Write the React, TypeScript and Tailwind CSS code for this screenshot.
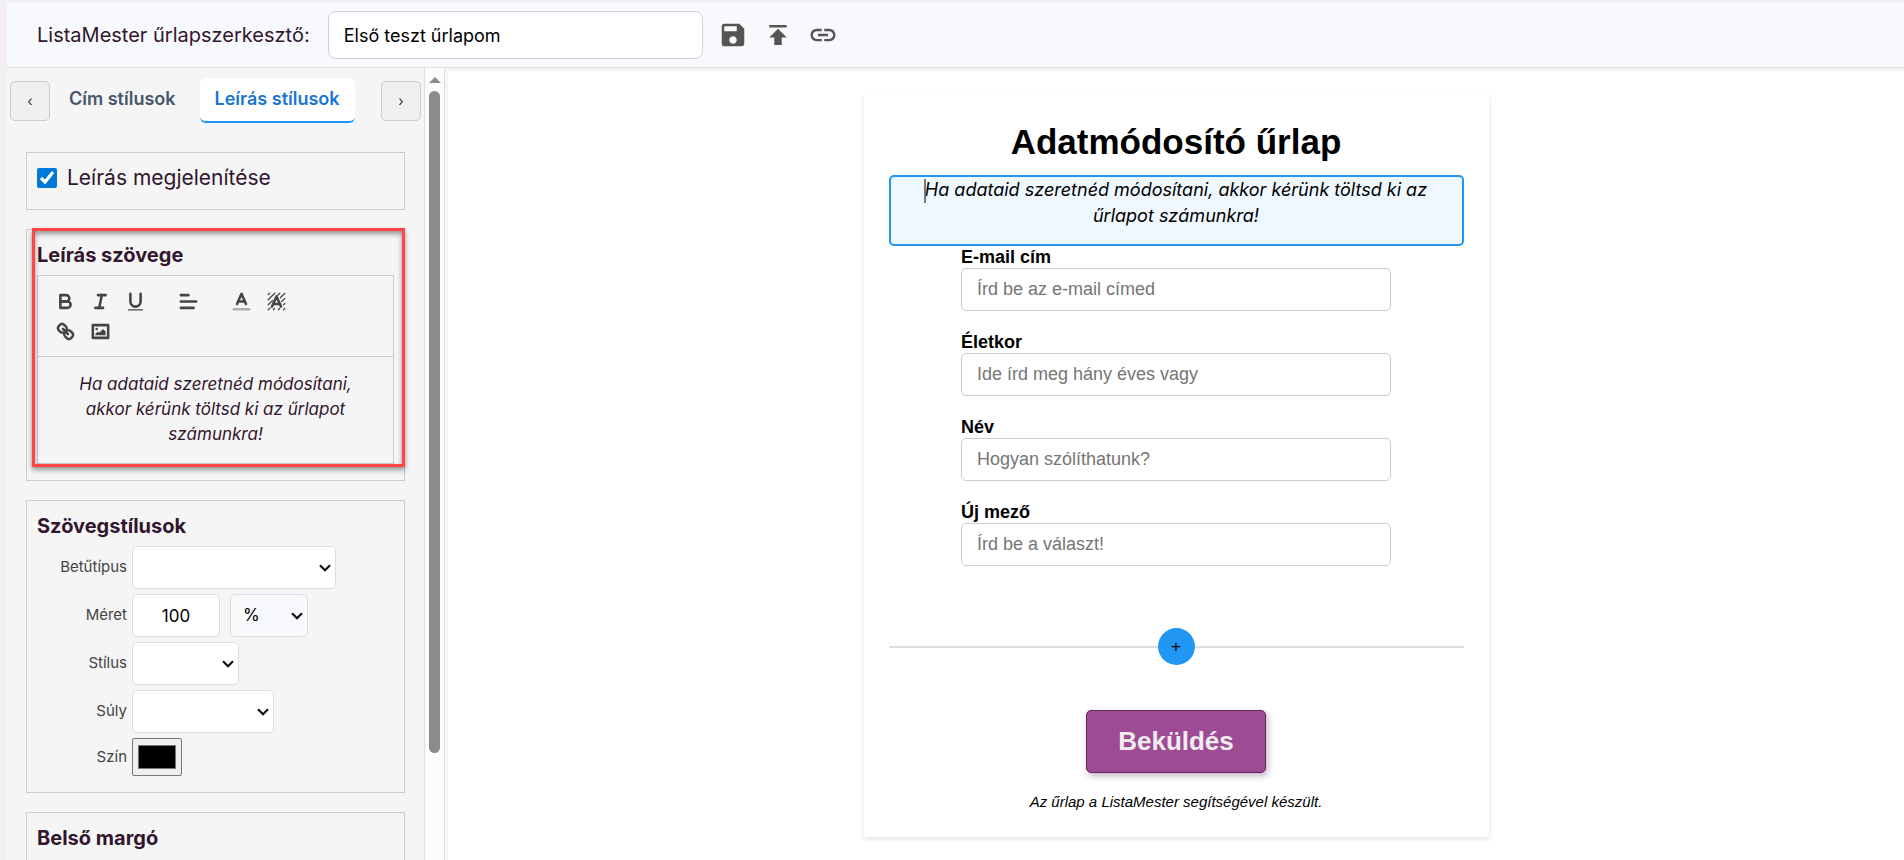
import type { ComponentProps, ReactNode } from "react";
import { MdLink, MdPublish, MdSave } from "react-icons/md";

const headerActions = [
  { label: "Mentés", icon: MdSave },
  { label: "Közzététel", icon: MdPublish },
  { label: "Hivatkozás", icon: MdLink },
];

const fields = [
  { id: "email", label: "E-mail cím", placeholder: "Írd be az e-mail címed" },
  { id: "age", label: "Életkor", placeholder: "Ide írd meg hány éves vagy" },
  { id: "name", label: "Név", placeholder: "Hogyan szólíthatunk?" },
  { id: "extra", label: "Új mező", placeholder: "Írd be a választ!" },
];

function ToolButton({ label, children }: { label: string; children: ReactNode }) {
  return (
    <button type="button" aria-label={label} className="flex h-[30px] w-[35px] items-center justify-center">
      <svg
        viewBox="0 0 18 18"
        className="size-[23px]"
        fill="none"
        stroke="#444"
        strokeWidth="2"
        strokeLinecap="round"
        strokeLinejoin="round"
      >
        {children}
      </svg>
    </button>
  );
}

function Toolbar() {
  return (
    <div className="flex flex-wrap gap-x-[18px] border border-[#ccc] p-[10px]">
      <div className="flex">
        <ToolButton label="Félkövér">
          <path d="M5,4H9.5A2.5,2.5,0,0,1,12,6.5v0A2.5,2.5,0,0,1,9.5,9H5A0,0,0,0,1,5,9V4A0,0,0,0,1,5,4Z" />
          <path d="M5,9h5.5A2.5,2.5,0,0,1,13,11.5v0A2.5,2.5,0,0,1,10.5,14H5a0,0,0,0,1,0,0V9A0,0,0,0,1,5,9Z" />
        </ToolButton>
        <ToolButton label="Dőlt">
          <line x1="7" x2="13" y1="4" y2="4" />
          <line x1="5" x2="11" y1="14" y2="14" />
          <line x1="8" x2="10" y1="14" y2="4" />
        </ToolButton>
        <ToolButton label="Aláhúzott">
          <path d="M5,3V9a4.012,4.012,0,0,0,4,4H9a4.012,4.012,0,0,0,4-4V3" />
          <rect x="3" y="15" width="12" height="1" rx="0.5" ry="0.5" fill="#444" stroke="none" />
        </ToolButton>
      </div>
      <div className="flex">
        <ToolButton label="Igazítás">
          <line x1="3" x2="15" y1="9" y2="9" />
          <line x1="3" x2="13" y1="14" y2="14" />
          <line x1="3" x2="9" y1="4" y2="4" />
        </ToolButton>
      </div>
      <div className="flex">
        <ToolButton label="Betűszín">
          <line x1="3" x2="15" y1="15" y2="15" opacity="0.4" />
          <polyline points="5.5 11 9 3 12.5 11" />
          <line x1="11.63" x2="6.38" y1="9" y2="9" />
        </ToolButton>
        <ToolButton label="Háttérszín">
          <g strokeWidth="1">
            <path d="M2.5,3.6L3.6,2.5M2.5,7.6L7.6,2.5M2.5,11.6L6,8.1M10,4.1L11.6,2.5M12,6.1L15.5,2.6M13,9.1L15.5,6.6M14.5,11.6L15.5,10.6M2.5,15.5L4,14M6.5,15.5L7.5,14.5M10.5,15.5L11.5,14.5M14.5,15.5L15.5,14.5" />
          </g>
          <polyline points="5.5 13 9 5 12.5 13" />
          <line x1="11.63" x2="6.38" y1="11" y2="11" />
        </ToolButton>
      </div>
      <div className="flex basis-full">
        <ToolButton label="Link">
          <line x1="7" x2="11" y1="7" y2="11" />
          <path d="M8.9,4.577a3.476,3.476,0,0,1,.36,4.679A3.476,3.476,0,0,1,4.577,8.9C3.185,7.5,2.035,6.4,4.217,4.217S7.5,3.185,8.9,4.577Z" />
          <path d="M13.423,9.1a3.476,3.476,0,0,0-4.679-.36,3.476,3.476,0,0,0,.36,4.679c1.392,1.392,2.5,2.542,4.679.36S14.815,10.5,13.423,9.1Z" />
        </ToolButton>
        <ToolButton label="Kép">
          <rect x="3" y="4" width="12" height="10" rx="0" />
          <circle cx="6" cy="7" r="1" fill="#444" stroke="none" />
          <polyline points="5 12 5 11 7 9 8 10 11 7 13 9 13 12 5 12" fill="#444" stroke="none" />
        </ToolButton>
      </div>
    </div>
  );
}

function Card({ title, children }: { title?: string; children?: ReactNode }) {
  return (
    <section className="border border-[#ccc] px-[10px] pb-[16px]">
      {title && <h2 className="pt-[9px] text-[20px] leading-[32px] font-bold text-[#32152e]">{title}</h2>}
      {children}
    </section>
  );
}

function StyleRow({ id, label, children }: { id: string; label: string; children: ReactNode }) {
  return (
    <div className="flex items-center gap-[5px]">
      <label htmlFor={id} className="w-[90px] text-right text-[15px] text-[#444]">
        {label}
      </label>
      {children}
    </div>
  );
}

function Select({ className = "", ...props }: ComponentProps<"select">) {
  return (
    <span className="relative flex">
      <select
        {...props}
        className={`h-[43px] appearance-none rounded-[5px] border border-[#ddd] px-[12px] text-[17px] text-black ${className}`}
      />
      <svg
        viewBox="0 0 12 8"
        className="pointer-events-none absolute top-[18px] right-[5px] h-[8px] w-[12px]"
        fill="none"
        stroke="#111"
        strokeWidth="2.2"
      >
        <path d="M1 1.2L6 6.2L11 1.2" />
      </svg>
    </span>
  );
}

function Sidebar() {
  return (
    <aside className="flex w-[441px] shrink-0 overflow-hidden border-r-[3px] border-[#f5f5f5] bg-[#f5f5f5]">
      <div className="flex-1">
        <nav className="flex items-center px-[3px] pt-[10px]">
          <button type="button" aria-label="Előző" className="size-10 rounded-[5px] border border-[#ccc] bg-[#efefef] text-[14px] text-[#333]">
            ‹
          </button>
          <div className="flex flex-1 gap-[9px] overflow-hidden pl-[4px] text-[18px] font-semibold">
            <button type="button" className="h-[45px] shrink-0 px-[15px] pb-[4px] text-[#475569]">
              Cím stílusok
            </button>
            <button type="button" className="h-[45px] shrink-0 rounded-[6px] border-b-2 border-[#2196f3] bg-white px-[15px] pb-[2px] text-[#1976d2]">
              Leírás stílusok
            </button>
          </div>
          <button type="button" aria-label="Következő" className="size-10 rounded-[5px] border border-[#ccc] bg-[#efefef] text-[14px] text-[#333]">
            ›
          </button>
        </nav>
        <div className="flex flex-col gap-[19px] px-[19px] pt-[29px]">
          <Card>
            <label className="flex h-[40px] items-center gap-[10px] pt-[10px] text-[21px] text-[#32152e]">
              <input type="checkbox" defaultChecked className="size-5 accent-[#0078d7]" />
              Leírás megjelenítése
            </label>
          </Card>
          <div className="relative">
            <Card title="Leírás szövege">
              <div className="pt-[4px]">
                <Toolbar />
                <div
                  contentEditable
                  suppressContentEditableWarning
                  className="border border-t-0 border-[#ccc] px-[32px] pt-[15px] pb-[16px] text-center text-[17px] leading-[25px] text-[#32152e] italic"
                >
                  Ha adataid szeretnéd módosítani, akkor kérünk töltsd ki az űrlapot számunkra!
                </div>
              </div>
            </Card>
            <div className="pointer-events-none absolute -top-px right-0 bottom-[14px] left-[6px] border-[3px] border-[#ff4545] shadow-[0_3px_5px_rgba(0,0,0,0.4),inset_0_3px_5px_rgba(0,0,0,0.4)]" />
          </div>
          <Card title="Szövegstílusok">
            <div className="flex flex-col gap-[5px] pt-[4px]">
              <StyleRow id="font" label="Betűtípus">
                <Select id="font" className="w-[204px] bg-white" />
              </StyleRow>
              <StyleRow id="size" label="Méret">
                <input
                  id="size"
                  defaultValue="100"
                  className="h-[43px] w-[88px] rounded-[5px] border border-[#ddd] bg-white text-center text-[17px] text-black"
                />
                <span className="pl-[5px]">
                  <Select aria-label="Mértékegység" className="w-[78px] bg-[#f8f9fc]">
                    <option>%</option>
                  </Select>
                </span>
              </StyleRow>
              <StyleRow id="style" label="Stílus">
                <Select id="style" className="w-[107px] bg-white" />
              </StyleRow>
              <StyleRow id="weight" label="Súly">
                <Select id="weight" className="w-[142px] bg-white" />
              </StyleRow>
              <StyleRow id="color" label="Szín">
                <input id="color" type="color" defaultValue="#000000" className="h-[38px] w-[50px] rounded-[2px] border border-[#767676] bg-[#efefef] px-[3px] py-[2px]" />
              </StyleRow>
            </div>
          </Card>
          <Card title="Belső margó">
            <div className="h-[48px]" />
          </Card>
        </div>
      </div>
      <div className="flex w-[21px] flex-col items-center border-x border-[#dcdfe3] bg-[#fcfcfc] pt-[9px] pb-[107px]">
        <svg viewBox="0 0 12 6" className="h-[6px] w-[12px]" fill="#8b8b8b">
          <path d="M6 0L12 6H0Z" />
        </svg>
        <div className="mt-[8px] w-[11px] flex-1 rounded-full bg-[#8b8b8b]" />
      </div>
    </aside>
  );
}

function FormPreview() {
  return (
    <form className="w-[625px] bg-white px-[25px] pt-[24px] pb-[24px] font-['Liberation_Sans',Arial,sans-serif] text-black shadow-[0_2px_5px_rgba(0,0,0,0.11)]">
      <h1 className="text-center text-[35px] leading-[46px] font-bold">Adatmódosító űrlap</h1>
      <div className="mt-[10px] h-[71px] rounded-[5px] border-2 border-[#2196f3] bg-[#f0f8ff] px-[20px] text-center font-[Inter,sans-serif] text-[18px] leading-[26px] italic">
        <span className="relative">
          <span className="absolute top-0 -left-px h-6 w-[2px] bg-[#777]" />
          Ha adataid szeretnéd módosítani, akkor kérünk töltsd ki az űrlapot számunkra!
        </span>
      </div>
      <div className="mx-auto flex w-[430px] flex-col gap-[20px]">
        {fields.map((f) => (
          <div key={f.id} className="flex flex-col">
            <label htmlFor={f.id} className="text-[18px] leading-[22px] font-bold">
              {f.label}
            </label>
            <input
              id={f.id}
              placeholder={f.placeholder}
              className="h-[43px] rounded-[5px] border border-[#ccc] px-[15px] text-[18px] placeholder:text-[#757575]"
            />
          </div>
        ))}
      </div>
      <div className="mt-[62px] flex items-center">
        <span className="h-[2px] flex-1 bg-[#ddd]" />
        <button type="button" aria-label="Mező hozzáadása" className="size-[37px] rounded-full bg-[#2196f3] text-[17px]">
          +
        </button>
        <span className="h-[2px] flex-1 bg-[#ddd]" />
      </div>
      <div className="mt-[45px] flex justify-center">
        <button
          type="button"
          className="h-[63px] w-[180px] rounded-[5px] border border-[#5e2a59] bg-[#9e4b93] text-[26px] font-bold text-[#f0ecef] shadow-[2px_3px_6px_rgba(94,42,89,0.35)]"
        >
          Beküldés
        </button>
      </div>
      <p className="mt-[18px] text-center text-[15px] leading-[22px] italic">Az űrlap a ListaMester segítségével készült.</p>
    </form>
  );
}

export default function App() {
  return (
    <div className="flex h-screen flex-col overflow-hidden bg-[#f3eef2] pt-[3px] pl-[7px] font-[Inter,sans-serif]">
      <header className="flex h-[65px] shrink-0 items-center border-b border-[#dcdfe3] bg-[#f8f9fc] pl-[30px]">
        <label htmlFor="form-name" className="text-[20px] whitespace-nowrap text-[#32152e]">
          ListaMester űrlapszerkesztő:
        </label>
        <input
          id="form-name"
          defaultValue="Első teszt űrlapom"
          className="ml-[18px] h-[48px] w-[375px] rounded-[8px] border border-[#ced4da] bg-white px-[15px] text-[18px] text-black"
        />
        <div className="ml-[15px] flex gap-[15px]">
          {headerActions.map(({ label, icon: Icon }) => (
            <button key={label} type="button" aria-label={label}>
              <Icon className="size-[30px] text-[#555]" />
            </button>
          ))}
        </div>
      </header>
      <div className="flex min-h-0 flex-1">
        <Sidebar />
        <main className="flex flex-1 items-start justify-center overflow-hidden border-t-[3px] border-[#f5f5f5] bg-white pt-[24px]">
          <FormPreview />
        </main>
      </div>
    </div>
  );
}
